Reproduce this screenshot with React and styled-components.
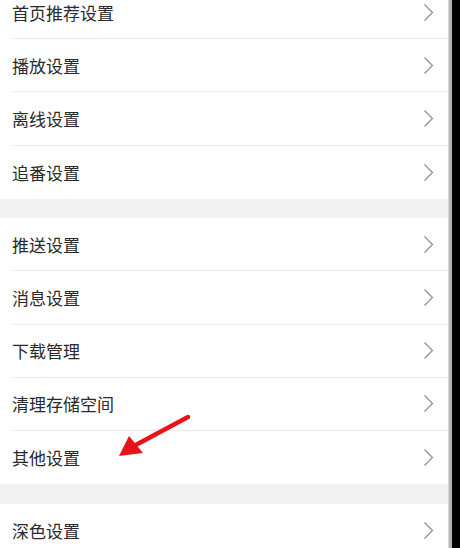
import React from "react";
import styled, { createGlobalStyle } from "styled-components";

const groups = [
  ["首页推荐设置", "播放设置", "离线设置", "追番设置"],
  ["推送设置", "消息设置", "下载管理", "清理存储空间", "其他设置"],
  ["深色设置"],
];

const Global = createGlobalStyle`
  html, body {
    margin: 0;
    padding: 0;
    background: #000;
    overflow: hidden;
  }
  body {
    font-family: "Noto Sans CJK SC", "Noto Sans", sans-serif;
  }
`;

const Chevron = () => (
  <svg width="11" height="19" viewBox="0 0 11 19" fill="none">
    <path d="M1.5 1.5 L9.5 9.5 L1.5 17.5" stroke="#8c8c8c" strokeWidth="1.2" />
  </svg>
);

const App = () => {
  return (
    <Styles.Screen>
      <Global />
      <Styles.Page>
        <Styles.List>
          {groups.map((items, gi) => (
            <React.Fragment key={gi}>
              {gi > 0 && <Styles.Gap />}
              {items.map((label, i) => (
                <Styles.Row key={label} last={i === items.length - 1}>
                  <span>{label}</span>
                  <Chevron />
                </Styles.Row>
              ))}
            </React.Fragment>
          ))}
        </Styles.List>
        <Styles.Arrow width="460" height="548" viewBox="0 0 460 548">
          <line x1="188" y1="417" x2="132" y2="447" stroke="#e8121a" strokeWidth="4.5" strokeLinecap="round" />
          <polygon points="119,456 129,436 143,453" fill="#e8121a" />
        </Styles.Arrow>
      </Styles.Page>
      <Styles.Edge />
    </Styles.Screen>
  );
};

// styled
const Styles = {
  Screen: styled.div`
    width: 460px;
    height: 548px;
    display: flex;
    overflow: hidden;
    background: #000;
  `,
  Page: styled.div`
    width: 448px;
    height: 548px;
    background: #fff;
    position: relative;
    overflow: hidden;
  `,
  List: styled.div`
    margin-top: -14px;
    display: flex;
    flex-direction: column;
  `,
  Row: styled.div`
    height: 53.2px;
    box-sizing: border-box;
    margin-left: 12px;
    padding-right: 14px;
    display: flex;
    align-items: center;
    justify-content: space-between;
    border-bottom: ${(p) => (p.last ? "none" : "1px solid #ececec")};
    span {
      font-size: 17px;
      color: #2a2a2a;
    }
  `,
  Gap: styled.div`
    height: 19.5px;
    background: #f2f2f2;
  `,
  Arrow: styled.svg`
    position: absolute;
    left: 0;
    top: 0;
    pointer-events: none;
  `,
  Edge: styled.div`
    width: 4px;
    height: 548px;
    background: linear-gradient(to right, #dcdcdc 0 1px, #b4b4b4 1px 4px);
  `,
};

export default App;
